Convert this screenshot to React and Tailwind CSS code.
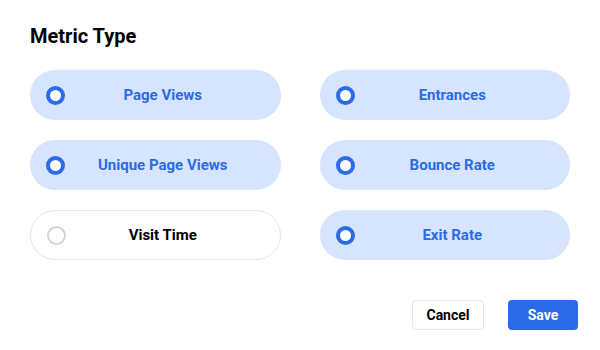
import React, { useState } from "react";

const OPTIONS = [
  { label: "Page Views", on: true },
  { label: "Entrances", on: true },
  { label: "Unique Page Views", on: true },
  { label: "Bounce Rate", on: true },
  { label: "Visit Time", on: false },
  { label: "Exit Rate", on: true },
];

export default function App() {
  const [sel, setSel] = useState(OPTIONS.map((o) => o.on));
  return (
    <div
      className="w-[600px] h-[350px] bg-white px-[30px] pt-[24px]"
      style={{ fontFamily: "Roboto, 'Noto Sans', sans-serif" }}
    >
      <h2 className="text-[20px] leading-[24px] font-bold text-black">Metric Type</h2>
      <div className="mt-[22px] grid grid-cols-2 gap-x-[39px] gap-y-[20px] w-[540px]">
        {OPTIONS.map((o, i) => {
          const on = sel[i];
          return (
            <button
              key={o.label}
              onClick={() => setSel((s) => s.map((v, j) => (j === i ? !v : v)))}
              className={
                "h-[50px] rounded-full flex items-center pl-[16px] pr-[20px] " +
                (on
                  ? "bg-[#d6e4fd]"
                  : "bg-white border border-[#e5e7eb]")
              }
            >
              <span
                className={
                  "w-[19px] h-[19px] rounded-full shrink-0 bg-white " +
                  (on ? "border-[4px] border-[#2c6be8]" : "border-2 border-[#d1d5db]")
                }
              />
              <span
                className={
                  "flex-1 text-center text-[15px] font-bold " +
                  (on ? "text-[#2c6be8]" : "text-black")
                }
              >
                {o.label}
              </span>
            </button>
          );
        })}
      </div>
      <div className="mt-[40px] flex justify-end gap-[24px] w-[548px]">
        <button className="w-[72px] h-[30px] rounded border border-[#e5e7eb] bg-white text-[14px] font-bold text-black">
          Cancel
        </button>
        <button className="w-[70px] h-[30px] rounded bg-[#2c6be8] text-[14px] font-bold text-white">
          Save
        </button>
      </div>
    </div>
  );
}
